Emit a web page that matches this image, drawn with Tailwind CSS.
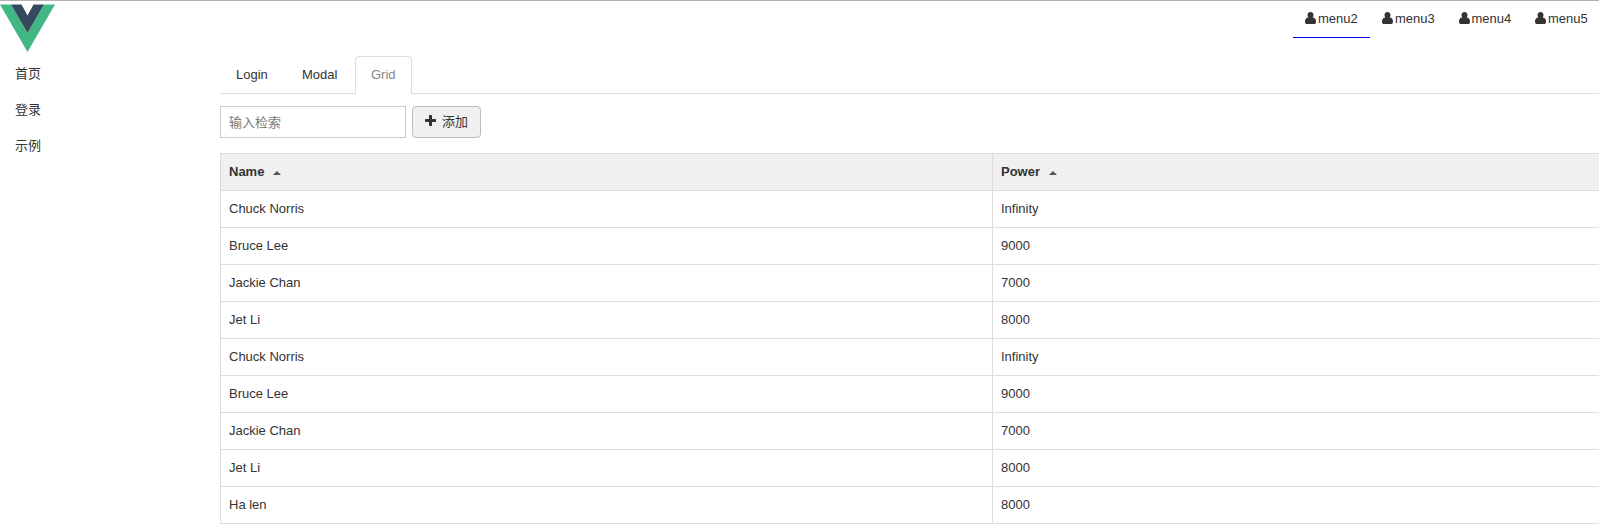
<!DOCTYPE html>
<html lang="zh">
<head>
<meta charset="utf-8">
<title>Grid</title>
<script src="https://cdn.jsdelivr.net/npm/@tailwindcss/browser@4"></script>
</head>
<body class="h-[532px] w-[1599px] overflow-hidden border-t border-[#b3b0b3] bg-white font-['Liberation_Sans','Noto_Sans_CJK_SC',sans-serif] text-[13px] leading-[18px] text-[#333]">
<svg width="0" height="0" class="hidden">
  <symbol id="user" viewBox="0 0 11 12"><path d="M5.500 0C7.200 0 8.500 1.300 8.500 3C8.500 4 8.100 4.900 7.600 5.500C10 5.500 11 7.400 11 9.700C11 11.100 10.200 12 8.900 12H2.100C.8 12 0 11.100 0 9.700C0 7.400 1 5.500 3.400 5.500C2.900 4.900 2.500 4 2.500 3C2.500 1.300 3.800 0 5.500 0Z" fill="currentColor"/></symbol>
</svg>
<div class="flex">
  <aside class="w-[220px] shrink-0 pt-[3px]">
    <svg class="block h-[48px] w-[55px]" viewBox="0 0 55 48" preserveAspectRatio="none">
      <path d="M0 .5H11L27.500 29L44 .5H55L27.500 48Z" fill="#41b883"/>
      <path d="M11 .5H21.500L27.500 11.500L33.500 .5H44L27.500 29Z" fill="#35495e"/>
    </svg>
    <nav class="flex flex-col pt-1 pl-[15px]">
      <a class="h-9 leading-9">首页</a>
      <a class="h-9 leading-9">登录</a>
      <a class="h-9 leading-9">示例</a>
    </nav>
  </aside>
  <main class="min-w-0 flex-1">
    <nav class="flex h-[37px] justify-end">
      <a class="flex w-[77px] items-start gap-[2px] border-b border-[#0000ff] pt-[9px] pl-3"><svg class="mt-[2px] h-3 w-[11px]"><use href="#user"/></svg>menu2</a>
      <a class="flex w-[76.500px] items-start gap-[2px] pt-[9px] pl-3"><svg class="mt-[2px] h-3 w-[11px]"><use href="#user"/></svg>menu3</a>
      <a class="flex w-[76.500px] items-start gap-[2px] pt-[9px] pl-3"><svg class="mt-[2px] h-3 w-[11px]"><use href="#user"/></svg>menu4</a>
      <a class="flex w-[76px] items-start gap-[2px] pt-[9px] pl-3"><svg class="mt-[2px] h-3 w-[11px]"><use href="#user"/></svg>menu5</a>
    </nav>
    <div class="mt-[18px] flex h-[38px] border-b border-[#ddd]">
      <a class="w-[66px] pt-[10px] pl-4">Login</a>
      <a class="w-[69px] pt-[10px] pl-4">Modal</a>
      <a class="h-[38px] w-[57px] rounded-t-[4px] border border-b-0 border-[#ddd] bg-white pt-[9px] pl-[15px] text-[#888]">Grid</a>
    </div>
    <div class="mt-3 flex gap-[6px]">
      <input class="h-8 w-[186px] border border-[#ccc] px-2 text-[13px] placeholder:text-[#777]" placeholder="输入检索">
      <button class="flex h-8 w-[69px] items-center gap-[6px] rounded-[4px] border border-[#bbb] bg-[#f0f0f0] pb-px pl-3 leading-[18px]"><svg class="mb-[2px] h-[11px] w-[11px]" viewBox="0 0 11 11"><path d="M4.700 0H6.300Q7 0 7 .7V4H10.300Q11 4 11 4.700V6.300Q11 7 10.300 7H7V10.300Q7 11 6.300 11H4.700Q4 11 4 10.300V7H.7Q0 7 0 6.300V4.700Q0 4 .7 4H4V.7Q4 0 4.700 0Z" fill="currentColor"/></svg>添加</button>
    </div>
    <div class="mt-[15px] grid grid-cols-[772px_1fr] border-t border-l border-[#ddd] *:h-[37px] *:border-b *:border-[#ddd] *:pt-[9px] *:pl-2 *:odd:border-r">
      <div class="flex gap-[9px] bg-[#f0f0f0] font-bold">Name<svg class="mt-2 h-1 w-2" viewBox="0 0 8 4"><path d="M0 4L4 0L8 4Z" fill="#555"/></svg></div>
      <div class="flex gap-[9px] bg-[#f0f0f0] font-bold">Power<svg class="mt-2 h-1 w-2" viewBox="0 0 8 4"><path d="M0 4L4 0L8 4Z" fill="#555"/></svg></div>
      <div>Chuck Norris</div><div>Infinity</div>
      <div>Bruce Lee</div><div>9000</div>
      <div>Jackie Chan</div><div>7000</div>
      <div>Jet Li</div><div>8000</div>
      <div>Chuck Norris</div><div>Infinity</div>
      <div>Bruce Lee</div><div>9000</div>
      <div>Jackie Chan</div><div>7000</div>
      <div>Jet Li</div><div>8000</div>
      <div>Ha len</div><div>8000</div>
    </div>
  </main>
</div>
</body>
</html>
